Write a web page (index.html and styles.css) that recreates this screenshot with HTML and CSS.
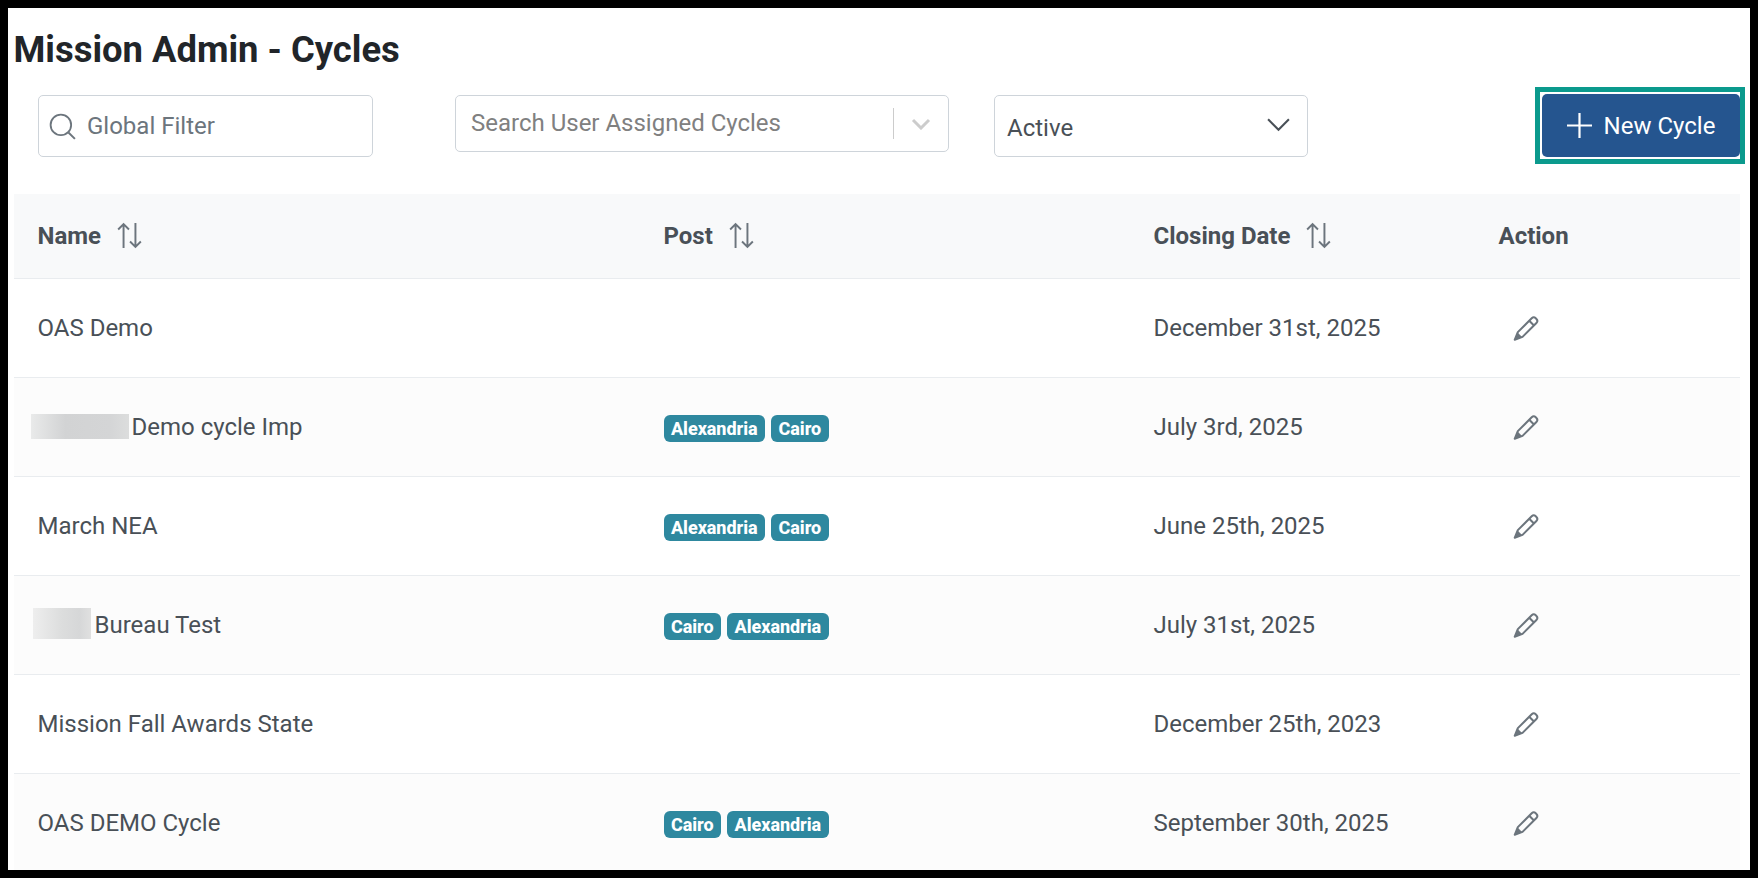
FILE: index.html
```html
<!DOCTYPE html>
<html lang="en">
<head>
<meta charset="utf-8">
<title>Mission Admin - Cycles</title>
<link rel="stylesheet" href="styles.css">
</head>
<body>
<svg class="defs" width="0" height="0" aria-hidden="true">
  <symbol id="sort" viewBox="0 0 25 25">
    <path d="M7 24V2M2 7l5-5 5 5" fill="none" stroke="#6c757d" stroke-width="1.8"/>
    <path d="M18 1v22M13 18l5 5 5-5" fill="none" stroke="#6c757d" stroke-width="1.8"/>
  </symbol>
  <symbol id="pencil" viewBox="0 0 25 25">
    <path d="M5.2 16.2 17.6 3.8a2.6 2.6 0 0 1 3.6 0l.6.6a2.6 2.6 0 0 1 0 3.6L9.4 20.4 2.4 23z" fill="none" stroke="#6c757d" stroke-width="1.8" stroke-linejoin="round"/>
    <path d="M15.4 6 19.6 10.200" fill="none" stroke="#6c757d" stroke-width="1.8"/>
    <path d="M5 16.500 9.200 20.700 2 23.500z" fill="#6c757d"/>
  </symbol>
</svg>
<main class="frame">
  <h1 class="title">Mission Admin - Cycles</h1>
  <div class="toolbar">
    <div class="field field-global">
      <svg class="search-icon" viewBox="0 0 25 25" aria-hidden="true"><circle cx="11" cy="11" r="9.500" fill="none" stroke="#6c757d" stroke-width="1.700"/><path d="M18 18l6 6" stroke="#6c757d" stroke-width="1.800" fill="none"/></svg>
      <span class="placeholder">Global Filter</span>
    </div>
    <div class="field field-search">
      <span class="placeholder search-text">Search User Assigned Cycles</span>
      <span class="divider"></span>
      <svg class="chev-small" viewBox="0 0 20 12" aria-hidden="true"><path d="M2 2l8 8 8-8" fill="none" stroke="#cccccc" stroke-width="3"/></svg>
    </div>
    <div class="field field-status">
      <span class="status-text">Active</span>
      <svg class="chev" viewBox="0 0 24 14" aria-hidden="true"><path d="M2 2l10 10L22 2" fill="none" stroke="#495057" stroke-width="2"/></svg>
    </div>
    <div class="highlight">
      <button class="new-btn" type="button">
        <svg class="plus" viewBox="0 0 25 25" aria-hidden="true"><path d="M12.500 0v25M0 12.500h25" stroke="#ffffff" stroke-width="2.200"/></svg>
        New Cycle
      </button>
    </div>
  </div>
  <table class="grid">
    <colgroup><col class="c1"><col class="c2"><col class="c3"><col class="c4"></colgroup>
    <thead>
      <tr>
        <th><span class="th-in">Name <svg class="sort"><use href="#sort"/></svg></span></th>
        <th><span class="th-in">Post <svg class="sort"><use href="#sort"/></svg></span></th>
        <th><span class="th-in">Closing Date <svg class="sort"><use href="#sort"/></svg></span></th>
        <th>Action</th>
      </tr>
    </thead>
    <tbody>
      <tr>
        <td>OAS Demo</td><td></td><td>December 31st, 2025</td>
        <td><svg class="edit"><use href="#pencil"/></svg></td>
      </tr>
      <tr>
        <td><span class="blur blur-a"></span>Demo cycle Imp</td>
        <td><span class="tag">Alexandria</span><span class="tag">Cairo</span></td>
        <td>July 3rd, 2025</td>
        <td><svg class="edit"><use href="#pencil"/></svg></td>
      </tr>
      <tr>
        <td>March NEA</td>
        <td><span class="tag">Alexandria</span><span class="tag">Cairo</span></td>
        <td>June 25th, 2025</td>
        <td><svg class="edit"><use href="#pencil"/></svg></td>
      </tr>
      <tr>
        <td><span class="blur blur-b"></span>Bureau Test</td>
        <td><span class="tag">Cairo</span><span class="tag">Alexandria</span></td>
        <td>July 31st, 2025</td>
        <td><svg class="edit"><use href="#pencil"/></svg></td>
      </tr>
      <tr>
        <td>Mission Fall Awards State</td><td></td><td>December 25th, 2023</td>
        <td><svg class="edit"><use href="#pencil"/></svg></td>
      </tr>
      <tr>
        <td>OAS DEMO Cycle</td>
        <td><span class="tag">Cairo</span><span class="tag">Alexandria</span></td>
        <td>September 30th, 2025</td>
        <td><svg class="edit"><use href="#pencil"/></svg></td>
      </tr>
    </tbody>
  </table>
</main>
</body>
</html>
```
FILE: styles.css
```css
* { box-sizing: border-box; }
html, body { margin: 0; padding: 0; }
body { font-family: Roboto, "Liberation Sans", sans-serif; color: #495057; background: #fff; }
.defs { position: absolute; }
.frame {
  width: 1758px;
  height: 878px;
  border: 8px solid #000;
  background: #fff;
  overflow: hidden;
  padding: 0 2px 0 6px;
}
.title {
  margin: 0 0 0 -0.5px;
  padding-top: 20px;
  height: 79px;
  font-size: 36.4px;
  line-height: 44px;
  font-weight: 700;
  color: #212529;
}
.toolbar { display: flex; align-items: flex-start; height: 107px; padding-left: 24px; }
.field {
  display: flex;
  align-items: center;
  margin-top: 8px;
  background: #fff;
  border: 1px solid #ced4da;
  border-radius: 5px;
  font-size: 24px;
}
.field-global { width: 335px; height: 62px; padding-left: 10px; }
.search-icon { width: 27px; height: 27px; margin-right: 11px; }
.placeholder { color: #6c757d; }
.field-search { width: 494px; height: 57px; margin-left: 82px; padding-left: 15px; }
.search-text { color: #808080; flex: 1; margin-top: -1px; }
.divider { width: 1px; height: 31px; background: #cccccc; }
.chev-small { width: 20px; height: 12px; margin: 0 17px 0 17px; }
.field-status { width: 314px; height: 62px; margin-left: 45px; padding: 0 12px; justify-content: space-between; }
.status-text { color: #495057; margin-top: 4px; }
.chev { width: 25px; height: 15px; margin-right: 4px; margin-top: -3px; }
.highlight {
  margin-left: 227px;
  width: 210px;
  height: 77px;
  padding: 2px;
  border: 5px solid #0b9a8d;
  background: #fff;
}
.new-btn {
  display: flex;
  align-items: center;
  justify-content: center;
  gap: 12px;
  width: 198px;
  height: 63px;
  border: 0;
  border-radius: 5px;
  background: #25558f;
  color: #fff;
  font: 400 24px Roboto, sans-serif;
}
.plus { width: 25px; height: 25px; }
.grid { width: 1726px; border-collapse: collapse; table-layout: fixed; font-size: 24px; }
.c1 { width: 626px; }
.c2 { width: 490px; }
.c3 { width: 345px; }
.c4 { width: 265px; }
th {
  height: 84px;
  padding: 0 24px 0 23.5px;
  text-align: left;
  font-weight: 700;
  color: #495057;
  background: #f8f9fa;
  border-bottom: 1px solid #e9ecef;
}
.th-in { display: inline-flex; align-items: center; gap: 15px; }
.sort { width: 27px; height: 27px; }
td {
  height: 99px;
  padding: 0 24px 0 23.5px;
  border-bottom: 1px solid #e9ecef;
  vertical-align: middle;
}
tbody tr:nth-child(even) { background: #fcfcfc; }
.edit { display: block; width: 28px; height: 28px; margin-left: 13px; }
.tag {
  display: inline-block;
  margin: 2px 6px 0 0;
  padding: 0 7.5px;
  height: 27px;
  line-height: 27px;
  border-radius: 6px;
  background: #2e889f;
  color: #fff;
  font-size: 18px;
  font-weight: 800;
  letter-spacing: -0.05px;
  vertical-align: middle;
}
.blur {
  display: inline-block;
  vertical-align: middle;
  background: linear-gradient(90deg, #e9eaea 0%, #d2d3d4 35%, #d4d5d6 80%, #dcdddd 100%);
}
.blur-a { width: 98px; height: 25px; margin: -13px 3px -10px -7px; }
.blur-b { width: 58px; height: 31px; margin: -14px 4px -9px -5px; background: linear-gradient(90deg, #eeeeee 0%, #dcdddd 50%, #d6d7d8 80%, #e0e0e0 100%); }
```
